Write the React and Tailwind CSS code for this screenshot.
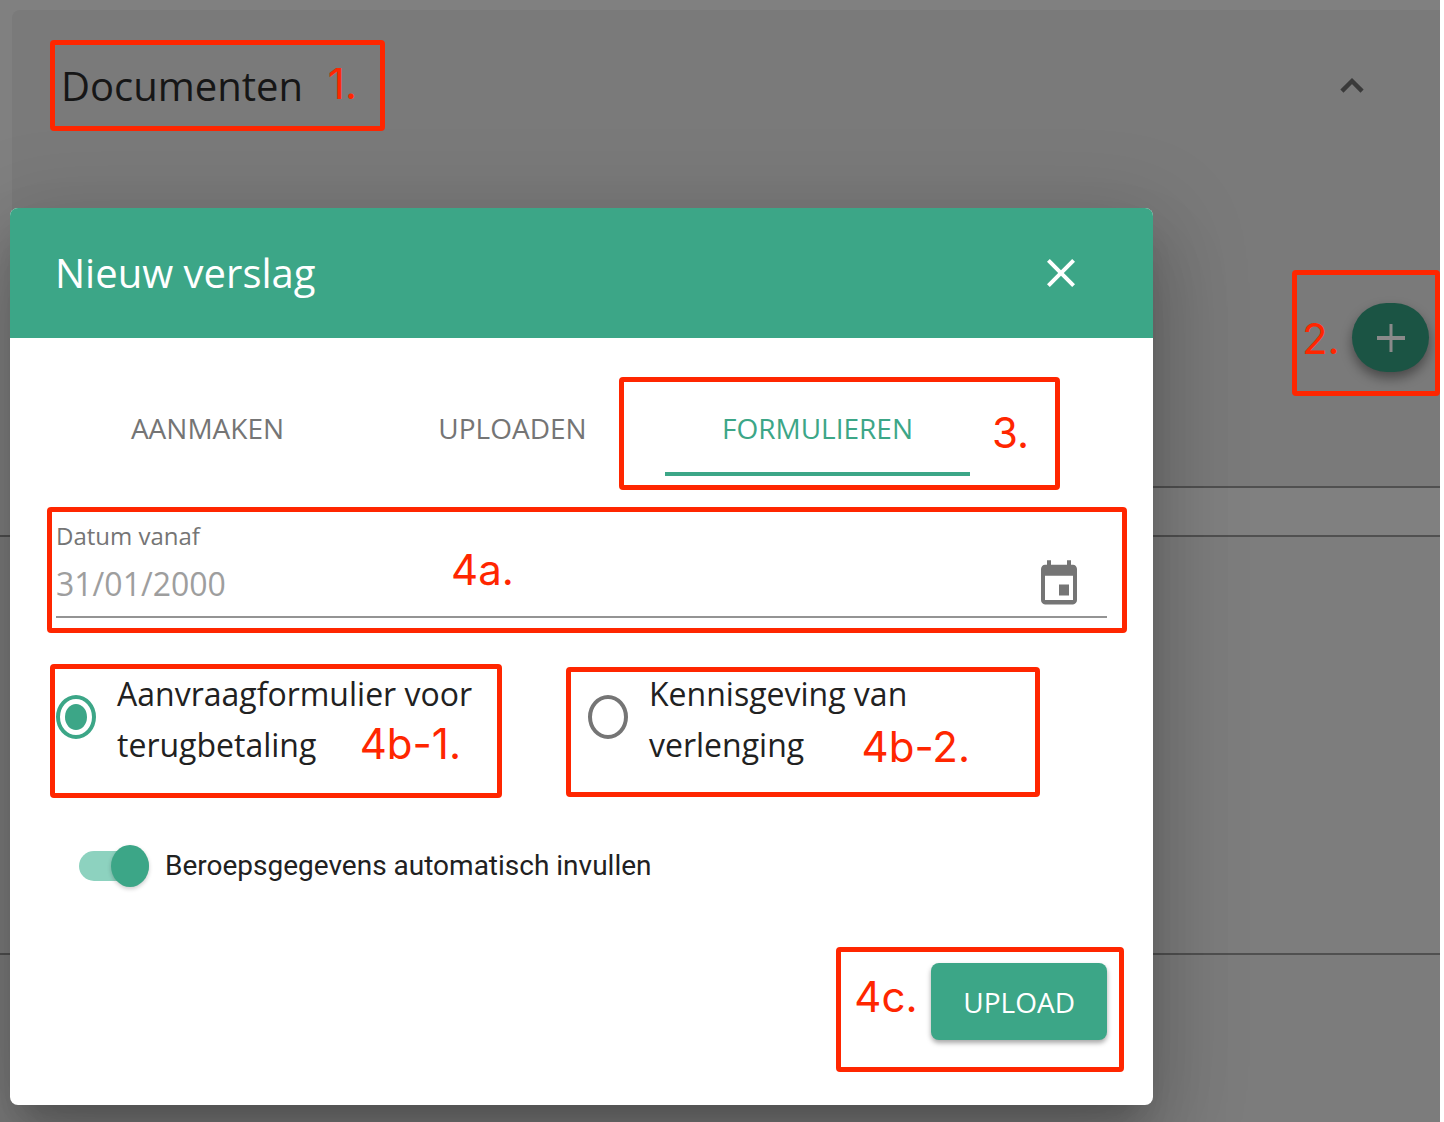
import { useState } from "react";
import { MdClose } from "react-icons/md";

const TABS = ["Aanmaken", "Uploaden", "Formulieren"];

// red outline with a step number, laid over the nearest relative parent
function Mark({ step, box, label }) {
  return (
    <div className={`pointer-events-none absolute rounded-[4px] border-[5px] border-[#ff2600] ${box}`}>
      <span className={`absolute font-['Inter',sans-serif] text-[42px] leading-[44px] text-[#ff2600] ${label}`}>
        {step}
      </span>
    </div>
  );
}

function FormOption({ value, checked, onChange, children }) {
  return (
    <label className="flex items-start gap-[21px]">
      <input
        type="radio"
        name="form"
        value={value}
        checked={checked}
        onChange={() => onChange(value)}
        className="mt-[27px] h-11 w-10 shrink-0 appearance-none rounded-[50%] border-4 border-[#757575] bg-clip-content p-[5px] checked:border-[#3ca687] checked:bg-[#3ca687]"
      />
      <span className="max-w-[380px] text-[32px] leading-[51px] text-[#212121]">{children}</span>
    </label>
  );
}

function CalendarIcon() {
  return (
    <svg viewBox="0 0 24 24" preserveAspectRatio="none" className="h-[53px] w-12" fill="currentColor">
      <path d="M17 12h-5v5h5v-5zM16 1v2H8V1H6v2H5c-1.11 0-1.99.9-1.99 2L3 19c0 1.1.89 2 2 2h14c1.1 0 2-.9 2-2V5c0-1.1-.9-2-2-2h-1V1h-2zm3 18H5V8h14v11z" />
    </svg>
  );
}

function ReportDialog() {
  const [tab, setTab] = useState("Formulieren");
  const [form, setForm] = useState("terugbetaling");

  return (
    <div
      role="dialog"
      aria-labelledby="dialog-title"
      className="w-full max-w-[1143px] rounded-lg bg-white shadow-[0_22px_30px_-14px_rgba(0,0,0,0.2),0_48px_76px_6px_rgba(0,0,0,0.14),0_18px_92px_16px_rgba(0,0,0,0.12)]"
    >
      <header className="flex h-[130px] items-center justify-between rounded-t-lg bg-[#3ca687] pr-[68px] pl-[45px] text-white">
        <h2 id="dialog-title" className="text-[40px] leading-[56px] font-medium">Nieuw verslag</h2>
        <button type="button" aria-label="Sluiten">
          <MdClose className="size-12" />
        </button>
      </header>

      <div className="px-[46px] pt-[42px] pb-[65px]">
        <div role="tablist" className="-mx-px flex">
          {TABS.map((name) => (
            <div key={name} className="relative w-full max-w-[305px]">
              <button
                type="button"
                role="tab"
                aria-selected={tab === name}
                onClick={() => setTab(name)}
                className="h-24 w-full border-b-4 border-transparent pt-1 text-[28px] text-[#757575] uppercase aria-selected:border-[#3ca687] aria-selected:text-[#3ca687]"
              >
                {name}
              </button>
              {name === "Formulieren" && (
                <Mark step="3." box="-top-[3px] -right-[90px] -bottom-[14px] -left-[46px]" label="top-[29px] right-[26px]" />
              )}
            </div>
          ))}
        </div>

        <div className="relative mt-11">
          <label htmlFor="date-from" className="block text-[24px] leading-8 text-[#757575]">Datum vanaf</label>
          <div className="flex h-[66px] items-center border-b-2 border-[#949494] pr-6">
            <input
              id="date-from"
              type="text"
              placeholder="31/01/2000"
              className="min-w-0 flex-1 text-[32px] leading-[44px] outline-none placeholder:text-[#9e9e9e]"
            />
            <button type="button" aria-label="Kies datum" className="text-[#757575]">
              <CalendarIcon />
            </button>
          </div>
          <Mark step="4a." box="-top-[13px] -right-5 -bottom-[15px] -left-[9px]" label="top-[36px] left-[399px]" />
        </div>

        <div className="mt-[50px] grid grid-cols-2 gap-[13px]">
          <div className="relative">
            <FormOption value="terugbetaling" checked={form === "terugbetaling"} onChange={setForm}>
              Aanvraagformulier voor terugbetaling
            </FormOption>
            <Mark step="4b-1." box="-top-1 right-[73px] -bottom-7 -left-[6px]" label="top-[53px] right-[36px]" />
          </div>
          <div className="relative">
            <FormOption value="verlenging" checked={form === "verlenging"} onChange={setForm}>
              Kennisgeving van verlenging
            </FormOption>
            <Mark step="4b-2." box="-top-px right-[67px] -bottom-[27px] -left-[22px]" label="top-[53px] right-[65px]" />
          </div>
        </div>

        <label className="mt-[74px] flex items-center gap-4 pl-[23px] font-['Roboto',sans-serif] text-[28px] leading-[44px] text-[#212121]">
          <input
            type="checkbox"
            role="switch"
            defaultChecked
            className="relative h-[30px] w-[70px] appearance-none rounded-full bg-[#bdbdbd] after:absolute after:-top-[6px] after:left-0 after:h-[42px] after:w-[38px] after:rounded-[50%] after:bg-white after:shadow-[0_2px_4px_rgba(0,0,0,0.2)] checked:bg-[#8dd2bf] checked:after:left-8 checked:after:bg-[#3ca687]"
          />
          Beroepsgegevens automatisch invullen
        </label>

        <div className="mt-[75px] flex justify-end">
          <div className="relative">
            <button
              type="button"
              className="h-[77px] rounded-lg bg-[#3ca687] px-8 text-[28px] text-white uppercase shadow-[0_3px_5px_rgba(0,0,0,0.35)]"
            >
              Upload
            </button>
            <Mark step="4c." box="-top-4 -right-[17px] -bottom-8 -left-[95px]" label="top-[23px] left-[13px]" />
          </div>
        </div>
      </div>
    </div>
  );
}

export default function App() {
  return (
    <div className="bg-white pr-1 font-['Open_Sans',sans-serif]">
      <main className="relative flex min-h-screen flex-col bg-[#808080] pt-[10px]">
        <section className="ml-3 rounded-tl-lg border-b-2 border-[#505050] bg-[#7a7a7a] pb-[114px]">
          <div className="flex items-center justify-between pt-[30px] pr-[66px] pl-[49px]">
            <div className="relative">
              <h1 className="text-[40px] leading-[91px] text-[#161616]">Documenten</h1>
              <Mark step="1." box="inset-y-0 -left-[11px] w-[335px]" label="top-[17px] right-[23px]" />
            </div>
            <button type="button" aria-label="Inklappen" className="text-[#3a3a3a]">
              <svg viewBox="0 0 24 24" className="size-11" fill="none" stroke="currentColor" strokeWidth="2.4">
                <path d="M6.5 14.8 12 9.3l5.5 5.5" />
              </svg>
            </button>
          </div>
          <div className="mt-[172px] flex justify-end pr-[11px]">
            <div className="relative">
              <button
                type="button"
                aria-label="Toevoegen"
                className="flex h-[69px] w-[77px] items-center justify-center rounded-full bg-[#1b5444] text-[#8a8a8a] shadow-[0_6px_12px_rgba(0,0,0,0.4)]"
              >
                <svg viewBox="0 0 28 28" className="size-7" stroke="currentColor">
                  <path d="M0 14h28" strokeWidth="4" />
                  <path d="M14 0v28" strokeWidth="3" />
                </svg>
              </button>
              <Mark step="2." box="-top-[33px] -right-[11px] -bottom-6 -left-[60px]" label="top-[42px] left-[5px]" />
            </div>
          </div>
        </section>
        <section className="mt-[47px] h-[420px] border-y-2 border-[#505050] bg-[#7d7d7d]" />
        <div className="flex-1 bg-[#7c7c7c]" />

        <div className="pointer-events-none absolute inset-0 top-[208px] flex items-start pl-[10px] *:pointer-events-auto">
          <ReportDialog />
        </div>
      </main>
    </div>
  );
}
